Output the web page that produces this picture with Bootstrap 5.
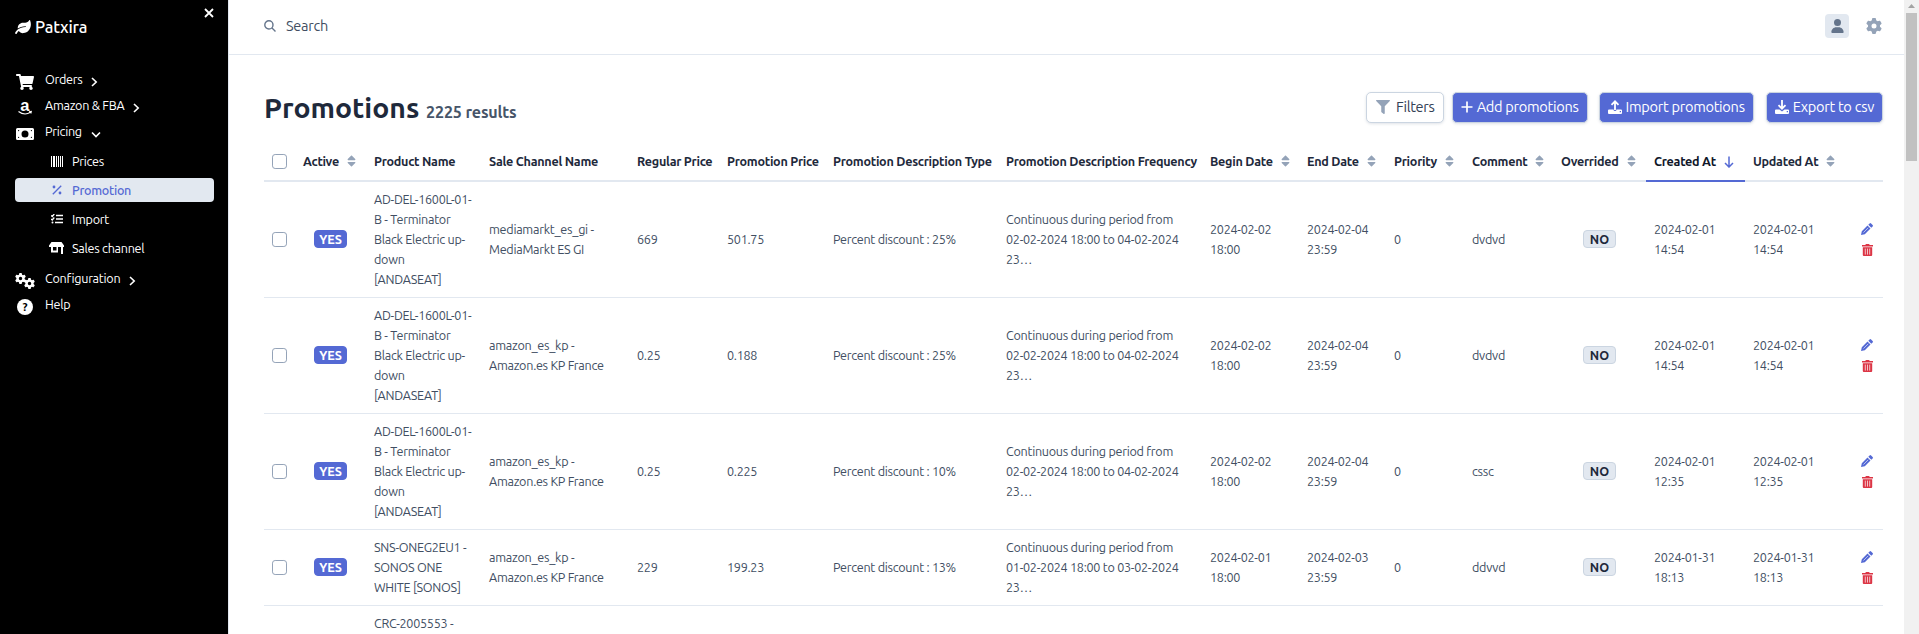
<!DOCTYPE html>
<html lang="en">
<head>
<meta charset="utf-8">
<title>Promotions</title>
<link href="https://cdn.jsdelivr.net/npm/bootstrap@5.3.0/dist/css/bootstrap.min.css" rel="stylesheet">
<style>
body{font-family:Ubuntu,"Noto Sans",sans-serif;font-size:12.6px;letter-spacing:-.27px;line-height:20px;color:#414e62;height:634px;overflow:hidden}
svg{display:block;fill:currentColor;flex:none}
.sidebar{width:229px;background:#000;color:#fff;border-right:1px solid #e2e8f0;padding:0 14px 0 15px}
.brand{font-size:16.5px;font-weight:500;line-height:24px;padding-top:15px;gap:4px;height:65px;letter-spacing:-.2px}
.close-x{position:absolute;left:204px;top:8px}
.item{height:26px;padding-left:1px}
.item .ico{width:18px;margin-right:11px;padding-top:5px}
.item .ar{margin:4px 0 0 9px}
.sub{height:24px;margin-bottom:5px;padding-left:34px;border-radius:4px}
.sub .ico{width:15px;margin-right:8px}
.sub.on{background:#e2e8f0;color:#5469d4;font-weight:500}
.topbar{height:55px;border-bottom:1px solid #e2e8f0;padding:0 22px 3px 35px;font-size:14.5px}
.avatar{width:24px;height:24px;background:#e2e8f0;border-radius:4px;color:#64748b}
.content{padding:37px 21px 0 35px}
h1{font-size:28.4px;font-weight:700;color:#1e293b;line-height:31px;letter-spacing:0}
h1 small{font-size:16.1px;font-weight:600;color:#475569;letter-spacing:-.15px}
.btn{font-size:14.6px;letter-spacing:-.3px;line-height:20px;height:31px;padding:4px 8px 5px;border:1px solid #cbd5e1;border-radius:5px;box-shadow:0 1px 3px rgba(100,116,139,.2)}
.btn-main,.btn-main:hover{background:#5469d4;color:#fff}
.grid{table-layout:fixed;border-collapse:separate;border-spacing:0;width:1619px}
.grid th{height:40px;padding:0 8px 1px;border-bottom:2px solid #e2e8f0;font-weight:580;color:#1e293b;white-space:nowrap;vertical-align:middle}
.grid th svg{display:inline-block;color:#94a3b8;margin-left:8px;vertical-align:-2px}
.grid th .form-check-input{position:relative;top:1px}
.grid th.sorted{font-weight:700;color:#0f172a;border-color:#5469d4}
.grid th.sorted svg{color:#5469d4;margin-left:7px}
.grid td{padding:7px 8px 8px;border-bottom:1px solid #e2e8f0;vertical-align:middle}
.form-check-input{display:block;width:15px;height:15px;margin:0;border-color:#94a3b8;border-radius:3px}
.tag{display:inline-block;font-weight:600;letter-spacing:0;line-height:16px;height:18px;width:33px;border:1px solid #cbd5e1;border-radius:4px;background:#e2e8f0;color:#1e293b}
.tag.yes{background:#5469d4;border-color:#5469d4;color:#fff}
.acts{gap:9px;color:#5469d4;padding-right:2px}
.scroll{width:15px;background:#f1f1f1;padding-top:13px}
.thumb{width:11px;height:148px;background:#c1c1c1}
</style>
<script src="https://cdn.jsdelivr.net/npm/bootstrap@5.3.0/dist/js/bootstrap.bundle.min.js"></script>
</head>
<body class="d-flex">
<svg class="d-none">
<symbol id="sort" viewBox="0 0 320 512"><path d="M41 288h238c21.4 0 32.1 25.9 17 41L177 448c-9.4 9.4-24.6 9.4-33.9 0L24 329c-15.1-15.1-4.4-41 17-41zm255-105L177 64c-9.4-9.4-24.6-9.4-33.9 0L24 183c-15.1 15.1-4.4 41 17 41h238c21.4 0 32.1-25.9 17-41z"/></symbol>
<symbol id="cog" viewBox="0 0 512 512"><path d="M495.9 166.6c3.2 8.7 .5 18.4-6.4 24.6l-43.3 39.4c1.1 8.3 1.7 16.8 1.7 25.4s-.6 17.1-1.7 25.4l43.3 39.4c6.9 6.2 9.6 15.9 6.4 24.6c-4.4 11.9-9.7 23.3-15.8 34.3l-4.7 8.1c-6.6 11-14 21.4-22.1 31.2c-5.9 7.2-15.7 9.6-24.5 6.8l-55.7-17.7c-13.4 10.3-28.2 18.9-44 25.4l-12.5 57.1c-2 9.1-9 16.3-18.2 17.8c-13.8 2.3-28 3.5-42.5 3.5s-28.7-1.2-42.5-3.5c-9.2-1.5-16.2-8.7-18.2-17.8l-12.5-57.1c-15.8-6.5-30.6-15.1-44-25.4L83.1 425.9c-8.8 2.8-18.6 .3-24.5-6.8c-8.1-9.8-15.5-20.2-22.1-31.2l-4.7-8.1c-6.1-11-11.4-22.4-15.8-34.3c-3.2-8.7-.5-18.4 6.4-24.6l43.3-39.4C64.6 273.1 64 264.6 64 256s.6-17.1 1.7-25.4L22.4 191.2c-6.9-6.2-9.6-15.9-6.4-24.6c4.4-11.9 9.7-23.3 15.8-34.3l4.7-8.1c6.6-11 14-21.4 22.1-31.2c5.9-7.2 15.7-9.6 24.5-6.8l55.7 17.7c13.4-10.3 28.2-18.9 44-25.4l12.5-57.1c2-9.1 9-16.3 18.2-17.8C227.3 1.2 241.5 0 256 0s28.7 1.2 42.5 3.5c9.2 1.5 16.2 8.7 18.2 17.8l12.5 57.1c15.8 6.5 30.6 15.1 44 25.4l55.7-17.7c8.8-2.8 18.6-.3 24.5 6.8c8.1 9.8 15.5 20.2 22.1 31.2l4.7 8.1c6.1 11 11.4 22.4 15.8 34.3zM256 336a80 80 0 1 0 0-160 80 80 0 1 0 0 160z"/></symbol>
<symbol id="right" viewBox="0 0 7 10"><path d="M1 1l4.2 4L1 9" fill="none" stroke="currentColor" stroke-width="1.6"/></symbol>
<symbol id="pen" viewBox="0 0 12 12"><path d="M0 12l.8-3.800 5.700-5.700 3 3-5.700 5.700zM7.300 1.700L8.600.4q.7-.7 1.500 0l1.500 1.500q.7.7 0 1.500l-1.300 1.300z"/><path d="M2.500 9.500l4.700-4.700" stroke="#fff" stroke-width=".6"/></symbol>
<symbol id="bin" viewBox="0 0 11 12"><path d="M0 1h3.200L4 0h3l.8 1H11v1.500H0zM.8 3.200h9.400V11q0 1-1 1H1.800q-1 0-1-1z"/><path d="M3.300 4.600v6M5.500 4.600v6M7.700 4.600v6" stroke="#fff" stroke-width=".7"/></symbol>
</svg>

<nav class="sidebar position-relative flex-shrink-0">
<svg class="close-x" width="10" height="10" viewBox="0 0 10 10"><path d="M1 1l8 8M9 1L1 9" stroke="#fff" stroke-width="1.800"/></svg>
<div class="brand d-flex"><svg width="16" height="14" viewBox="0 0 576 512" style="margin-top:5px"><path d="M546.2 9.700c-5.600-12.500-21.600-13-28.300-1.200C486.900 62.400 431.400 96 368 96h-80C182 96 96 182 96 288c0 7 .8 13.700 1.500 20.500C161.300 262.800 253.400 224 384 224c8.800 0 16 7.200 16 16s-7.200 16-16 16C132.600 256 26 410.100 2.400 468c-6.600 16.300 1.200 34.900 17.500 41.600 16.400 6.800 35-1.100 41.800-17.300 1.500-3.600 20.900-47.900 71.900-90.600 32.400 43.900 94 85.800 174.900 77.200C465.500 467.500 576 326.700 576 154.300c0-50.200-10.800-102.200-29.800-144.600z"/></svg><span>Patxira</span></div>
<div class="item d-flex mt-1"><span class="ico d-flex"><svg width="18" height="16" viewBox="0 0 576 512"><path d="M528.120 301.319l47.273-208C578.806 78.301 567.391 64 551.990 64H159.208l-9.166-44.810C147.758 8.021 137.930 0 126.529 0H24C10.745 0 0 10.745 0 24v16c0 13.255 10.745 24 24 24h69.883l70.248 343.435C147.325 417.100 136 435.222 136 456c0 30.928 25.072 56 56 56s56-25.072 56-56c0-15.674-6.447-29.835-16.824-40h209.647C430.447 426.165 424 440.326 424 456c0 30.928 25.072 56 56 56s56-25.072 56-56c0-22.172-12.888-41.332-31.579-50.405l5.517-24.276c3.413-15.018-8.002-29.319-23.403-29.319H218.117l-6.545-32h293.145c11.206 0 20.920-7.754 23.403-18.681z"/></svg></span><span>Orders</span><svg class="ar" width="7" height="20"><use href="#right" width="7" height="10" y="4"/></svg></div>
<div class="item d-flex"><span class="ico d-flex justify-content-center"><svg width="14" height="16" viewBox="0 0 14 16" overflow="visible"><text x="2.200" y="10.500" font-size="16.500" font-weight="700" font-family="Liberation Sans" fill="#fff">a</text><path d="M.5 11.500q6 4.500 12 .8M11 11.800l2.300-.3-.5 2" fill="none" stroke="#fff" stroke-width="1.100"/></svg></span><span>Amazon &amp; FBA</span><svg class="ar" width="7" height="20"><use href="#right" width="7" height="10" y="4"/></svg></div>
<div class="item d-flex" style="margin-bottom:11px"><span class="ico d-flex" style="padding-top:6px"><svg width="18" height="14" viewBox="0 0 18 14"><path fill-rule="evenodd" d="M1.500 1h15Q18 1 18 2.500v9q0 1.500-1.500 1.500h-15Q0 13 0 11.500v-9Q0 1 1.500 1zM2 3v1.500L3.500 3zm14 0h-1.500L16 4.500zM2 11h1.500L2 9.500zm14 0V9.500L14.500 11zM9 3.500a3.500 3.500 0 100 7 3.500 3.500 0 000-7z"/></svg></span><span>Pricing</span><svg class="ar" width="10" height="20" viewBox="0 0 10 20"><path d="M1 7.500l4 4 4-4" fill="none" stroke="#fff" stroke-width="1.600"/></svg></div>
<div class="sub d-flex align-items-center" style="margin-top:-9px"><span class="ico d-flex justify-content-center"><svg width="12" height="11" viewBox="0 0 12 11"><path d="M0 0h1v11H0zM2 0h2v11H2zM5 0h1v11H5zM7 0h1v11H7zM9 0h1v11H9zM11 0h1v11h-1z"/></svg></span>Prices</div>
<div class="sub on d-flex align-items-center"><span class="ico d-flex justify-content-center"><svg width="10" height="10" viewBox="0 0 10 10"><path d="M.8 9.200L9.200.8" stroke="currentColor" stroke-width="1.300"/><circle cx="2" cy="2" r="1.400"/><circle cx="8" cy="8" r="1.400"/></svg></span>Promotion</div>
<div class="sub d-flex align-items-center"><span class="ico d-flex justify-content-center"><svg width="12" height="10" viewBox="0 0 12 10"><path d="M5 1.500h7M5 5h7M4 8.500h8M0 1.500l1.200 1L3.300 0M0 5l1.200 1 2.100-2.500" fill="none" stroke="#fff" stroke-width="1.300"/><circle cx="1.500" cy="8.500" r="1"/></svg></span>Import</div>
<div class="sub d-flex align-items-center"><span class="ico d-flex justify-content-center"><svg width="15" height="12" viewBox="0 0 15 12"><path fill-rule="evenodd" d="M2.500 0h10L15 3.500V5h-1v7h-2V5H9v5.500H2V5H0V3.500zM4 5v3.500h3.500V5z"/></svg></span>Sales channel</div>
<div class="item d-flex" style="margin-top:8px"><span class="ico d-flex" style="margin-left:-1px;width:19px"><svg width="20" height="16" viewBox="0 0 20 16"><use href="#cog" width="11" height="11"/><use href="#cog" x="9" y="5" width="11" height="11"/></svg></span><span>Configuration</span><svg class="ar" width="7" height="20"><use href="#right" width="7" height="10" y="4"/></svg></div>
<div class="item d-flex"><span class="ico d-flex justify-content-center"><svg width="16" height="16" viewBox="0 0 16 16"><circle cx="8" cy="8" r="8"/><text x="8" y="12" text-anchor="middle" font-size="11.500" font-weight="700" fill="#000">?</text></svg></span><span>Help</span></div>
</nav>

<div class="flex-grow-1">
<header class="topbar d-flex align-items-center"><svg width="12" height="12" viewBox="0 0 12 12"><path d="M8 8l3.500 3.500M9 4.900a4.100 4.100 0 11-8.200 0 4.100 4.100 0 018.200 0z" fill="none" stroke="#64748b" stroke-width="1.400"/></svg><span style="margin-left:10px">Search</span>
<span class="avatar d-flex align-items-center justify-content-center ms-auto"><svg width="13" height="14" viewBox="0 0 448 512"><path d="M224 256A128 128 0 1 0 224 0a128 128 0 1 0 0 256zm-45.700 48C79.800 304 0 383.800 0 482.300C0 498.700 13.300 512 29.700 512H418.300c16.400 0 29.700-13.300 29.700-29.700C448 383.800 368.200 304 269.700 304H178.300z"/></svg></span>
<svg width="16" height="16" style="margin-left:17px;color:#94a3b8"><use href="#cog"/></svg></header>
<main class="content">
<div class="d-flex">
<h1 class="m-0 me-auto">Promotions <small>2225 results</small></h1>
<button class="btn bg-white d-flex align-items-center" style="margin-right:8px;padding-left:9px;color:#334155"><svg width="14" height="14" viewBox="0 0 512 512" style="color:#94a3b8;margin-right:6px"><path d="M487.976 0H24.028C2.710 0-8.047 25.866 7.058 40.971L192 225.941V432c0 7.831 3.821 15.170 10.237 19.662l80 55.980C298.020 518.690 320 507.493 320 487.980V225.941l184.947-184.970C520.021 25.896 509.338 0 487.976 0z"/></svg>Filters</button>
<button class="btn btn-main d-flex align-items-center" style="margin-right:11px"><svg width="12" height="12" viewBox="0 0 12 12" style="margin-right:4px"><path d="M6 .5v11M.5 6h11" stroke="#fff" stroke-width="1.700"/></svg>Add promotions</button>
<button class="btn btn-main d-flex align-items-center" style="margin-right:12px"><svg width="14" height="14" viewBox="0 0 14 14" style="margin-right:4px"><path d="M7 10V1.500M3.500 4.800L7 1.300l3.500 3.500" fill="none" stroke="#fff" stroke-width="1.800"/><path fill-rule="evenodd" d="M1 9.500h4.500q0 1.500 1.500 1.500t1.500-1.500H13q1 0 1 1V13q0 1-1 1H1q-1 0-1-1v-2.500q0-1 1-1zM11.700 11v1.300H13V11z"/></svg>Import promotions</button>
<button class="btn btn-main d-flex align-items-center"><svg width="14" height="14" viewBox="0 0 14 14" style="margin-right:4px"><path d="M7 0v8.500M3.500 5.200L7 8.700l3.500-3.500" fill="none" stroke="#fff" stroke-width="1.800"/><path fill-rule="evenodd" d="M1 9.500h3.500L7 11.500l2.500-2H13q1 0 1 1V13q0 1-1 1H1q-1 0-1-1v-2.500q0-1 1-1zM11.700 11v1.300H13V11z"/></svg>Export to csv</button>
</div>
<table class="grid" style="margin-top:14px">
<colgroup><col style="width:31px"><col style="width:71px"><col style="width:115px"><col style="width:148px"><col style="width:90px"><col style="width:106px"><col style="width:173px"><col style="width:204px"><col style="width:97px"><col style="width:87px"><col style="width:78px"><col style="width:89px"><col style="width:93px"><col style="width:99px"><col style="width:99px"><col></colgroup>
<thead><tr><th><input type="checkbox" class="form-check-input"></th><th>Active<svg width="9" height="14"><use href="#sort"/></svg></th><th>Product Name</th><th>Sale Channel Name</th><th>Regular Price</th><th>Promotion Price</th><th>Promotion Description Type</th><th>Promotion Description Frequency</th><th>Begin Date<svg width="9" height="14"><use href="#sort"/></svg></th><th>End Date<svg width="9" height="14"><use href="#sort"/></svg></th><th>Priority<svg width="9" height="14"><use href="#sort"/></svg></th><th>Comment<svg width="9" height="14"><use href="#sort"/></svg></th><th>Overrided<svg width="9" height="14"><use href="#sort"/></svg></th><th class="sorted">Created At<svg width="12" height="12" viewBox="0 0 12 12"><path d="M6 .5v10.500M2 7l4 4 4-4" fill="none" stroke="currentColor" stroke-width="1.500"/></svg></th><th>Updated At<svg width="9" height="14"><use href="#sort"/></svg></th><th></th></tr></thead>
<tbody>
<tr><td><input type="checkbox" class="form-check-input"></td><td class="text-center"><span class="tag yes">YES</span></td><td>AD-DEL-1600L-01-<br>B - Terminator<br>Black Electric up-<br>down<br>[ANDASEAT]</td><td>mediamarkt_es_gi -<br>MediaMarkt ES GI</td><td>669</td><td>501.75</td><td>Percent discount : 25%</td><td>Continuous during period from<br>02-02-2024 18:00 to 04-02-2024<br>23…</td><td>2024-02-02<br>18:00</td><td>2024-02-04<br>23:59</td><td>0</td><td>dvdvd</td><td class="text-center"><span class="tag">NO</span></td><td>2024-02-01<br>14:54</td><td>2024-02-01<br>14:54</td><td><div class="acts d-flex flex-column align-items-end"><svg width="12" height="12"><use href="#pen"/></svg><svg class="text-danger" width="11" height="12"><use href="#bin"/></svg></div></td></tr>
<tr><td><input type="checkbox" class="form-check-input"></td><td class="text-center"><span class="tag yes">YES</span></td><td>AD-DEL-1600L-01-<br>B - Terminator<br>Black Electric up-<br>down<br>[ANDASEAT]</td><td>amazon_es_kp -<br>Amazon.es KP France</td><td>0.25</td><td>0.188</td><td>Percent discount : 25%</td><td>Continuous during period from<br>02-02-2024 18:00 to 04-02-2024<br>23…</td><td>2024-02-02<br>18:00</td><td>2024-02-04<br>23:59</td><td>0</td><td>dvdvd</td><td class="text-center"><span class="tag">NO</span></td><td>2024-02-01<br>14:54</td><td>2024-02-01<br>14:54</td><td><div class="acts d-flex flex-column align-items-end"><svg width="12" height="12"><use href="#pen"/></svg><svg class="text-danger" width="11" height="12"><use href="#bin"/></svg></div></td></tr>
<tr><td><input type="checkbox" class="form-check-input"></td><td class="text-center"><span class="tag yes">YES</span></td><td>AD-DEL-1600L-01-<br>B - Terminator<br>Black Electric up-<br>down<br>[ANDASEAT]</td><td>amazon_es_kp -<br>Amazon.es KP France</td><td>0.25</td><td>0.225</td><td>Percent discount : 10%</td><td>Continuous during period from<br>02-02-2024 18:00 to 04-02-2024<br>23…</td><td>2024-02-02<br>18:00</td><td>2024-02-04<br>23:59</td><td>0</td><td>cssc</td><td class="text-center"><span class="tag">NO</span></td><td>2024-02-01<br>12:35</td><td>2024-02-01<br>12:35</td><td><div class="acts d-flex flex-column align-items-end"><svg width="12" height="12"><use href="#pen"/></svg><svg class="text-danger" width="11" height="12"><use href="#bin"/></svg></div></td></tr>
<tr><td><input type="checkbox" class="form-check-input"></td><td class="text-center"><span class="tag yes">YES</span></td><td>SNS-ONEG2EU1 -<br>SONOS ONE<br>WHITE [SONOS]</td><td>amazon_es_kp -<br>Amazon.es KP France</td><td>229</td><td>199.23</td><td>Percent discount : 13%</td><td>Continuous during period from<br>01-02-2024 18:00 to 03-02-2024<br>23…</td><td>2024-02-01<br>18:00</td><td>2024-02-03<br>23:59</td><td>0</td><td>ddvvd</td><td class="text-center"><span class="tag">NO</span></td><td>2024-01-31<br>18:13</td><td>2024-01-31<br>18:13</td><td><div class="acts d-flex flex-column align-items-end"><svg width="12" height="12"><use href="#pen"/></svg><svg class="text-danger" width="11" height="12"><use href="#bin"/></svg></div></td></tr>
<tr><td></td><td></td><td>CRC-2005553 -</td><td colspan="13"></td></tr>
</tbody></table>
</main>
</div>
<div class="scroll flex-shrink-0 d-flex flex-column align-items-center position-relative"><svg width="7" height="4" viewBox="0 0 7 4" style="position:absolute;top:4px;left:4px"><path d="M0 4l3.500-4L7 4z" fill="#a3a3a3"/></svg><div class="thumb"></div></div>
</body></html>
